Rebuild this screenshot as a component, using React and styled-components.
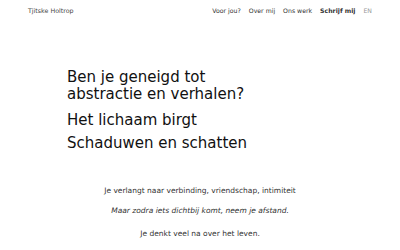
import React from "react";
import styled, { createGlobalStyle } from "styled-components";

const GlobalStyle = createGlobalStyle`
  html, body {
    margin: 0;
    padding: 0;
    background: #ffffff;
  }
  body {
    font-family: "DejaVu Sans", Verdana, sans-serif;
    color: #1a1a1a;
  }
`;

const navItems = [
  { label: "Voor jou?" },
  { label: "Over mij" },
  { label: "Ons werk" },
  { label: "Schrijf mij", active: true },
  { label: "EN", muted: true },
];

const App = () => {
  return (
    <>
      <GlobalStyle />
      <Page>
        <Header>
          <Brand>Tjitske Holtrop</Brand>
          <Nav>
            {navItems.map((item) => (
              <NavLink key={item.label} $active={item.active} $muted={item.muted}>
                {item.label}
              </NavLink>
            ))}
          </Nav>
        </Header>
        <Hero>
          <Heading>
            Ben je geneigd tot
            <br />
            abstractie en verhalen?
          </Heading>
          <Heading $gap={9}>Het lichaam birgt</Heading>
          <Heading $gap={6}>Schaduwen en schatten</Heading>
        </Hero>
        <Story>
          <Line>Je verlangt naar verbinding, vriendschap, intimiteit</Line>
          <Line $italic>Maar zodra iets dichtbij komt, neem je afstand.</Line>
          <Line $spaced>Je denkt veel na over het leven.</Line>
          <Line>Maar voelt het niet stromen.</Line>
        </Story>
      </Page>
    </>
  );
};

const Page = styled.div`
  width: 400px;
  height: 250px;
  overflow: hidden;
`;

const Header = styled.header`
  display: flex;
  justify-content: space-between;
  align-items: center;
  padding: 3px 28px 0 28px;
  height: 14px;
`;

const Brand = styled.div`
  font-size: 6.3px;
  color: #444;
`;

const Nav = styled.nav`
  display: flex;
  gap: 8px;
  align-items: center;
`;

const NavLink = styled.a`
  font-size: 6.2px;
  color: ${(p) => (p.$muted ? "#999" : "#333")};
  font-weight: ${(p) => (p.$active ? "bold" : "normal")};
  text-decoration: none;
  cursor: pointer;
`;

const Hero = styled.section`
  padding: 52px 0 0 67px;
  display: flex;
  flex-direction: column;
`;

const Heading = styled.h2`
  margin: ${(p) => (p.$gap ? `${p.$gap}px 0 0` : "0")};
  font-size: 15px;
  font-weight: normal;
  line-height: 17px;
  color: #111;
`;

const Story = styled.section`
  padding-top: 29px;
  display: flex;
  flex-direction: column;
  align-items: center;
`;

const Line = styled.p`
  margin: ${(p) => (p.$spaced ? "3px 0 0" : "0")};
  font-size: 7.5px;
  line-height: 20px;
  color: #333;
  font-style: ${(p) => (p.$italic ? "italic" : "normal")};
`;

export default App;
